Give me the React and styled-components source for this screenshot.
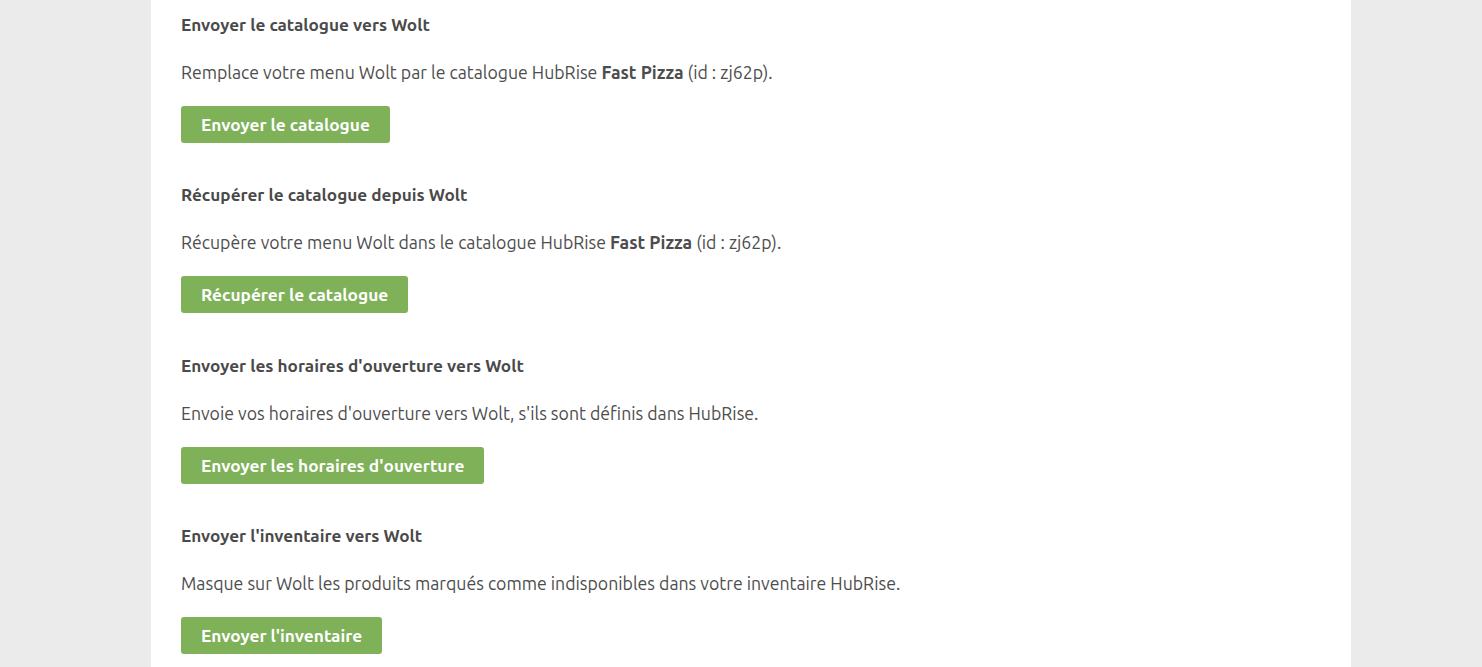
import styled, { createGlobalStyle } from "styled-components";

const GlobalStyle = createGlobalStyle`
  html, body {
    margin: 0;
    padding: 0;
    background: #ebebeb;
    font-family: Ubuntu, "Open Sans", "Liberation Sans", sans-serif;
    color: #4d4d4d;
  }
`;

const Page = styled.div`
  padding-left: 151px;
  height: 667px;
  overflow: hidden;
`;

const Panel = styled.div`
  width: 1200px;
  min-height: 667px;
  background: #fff;
  box-sizing: border-box;
  padding: 14px 30px 0;
`;

const Section = styled.section`
  height: 170.3px;
`;

const Title = styled.h3`
  margin: 0;
  font-size: 17.2px;
  line-height: 22px;
  font-weight: 600;
  color: #4a4a4a;
`;

const Text = styled.p`
  margin: 26px 0 0;
  font-size: 17.7px;
  line-height: 22px;
  b {
    font-weight: 700;
  }
`;

const Button = styled.button`
  margin-top: 22px;
  height: 37px;
  padding: 0 20px;
  border: none;
  border-radius: 3px;
  background: #7eb158;
  color: #fff;
  font-family: inherit;
  font-size: 17.3px;
  font-weight: 600;
  cursor: pointer;
`;

const sections = [
  {
    title: "Envoyer le catalogue vers Wolt",
    text: (
      <>
        Remplace votre menu Wolt par le catalogue HubRise <b>Fast Pizza</b> (id : zj62p).
      </>
    ),
    button: "Envoyer le catalogue",
  },
  {
    title: "Récupérer le catalogue depuis Wolt",
    text: (
      <>
        Récupère votre menu Wolt dans le catalogue HubRise <b>Fast Pizza</b> (id : zj62p).
      </>
    ),
    button: "Récupérer le catalogue",
  },
  {
    title: "Envoyer les horaires d'ouverture vers Wolt",
    text: "Envoie vos horaires d'ouverture vers Wolt, s'ils sont définis dans HubRise.",
    button: "Envoyer les horaires d'ouverture",
  },
  {
    title: "Envoyer l'inventaire vers Wolt",
    text: "Masque sur Wolt les produits marqués comme indisponibles dans votre inventaire HubRise.",
    button: "Envoyer l'inventaire",
  },
];

export default function App() {
  return (
    <>
      <GlobalStyle />
      <Page>
        <Panel>
          {sections.map((s) => (
            <Section key={s.button}>
              <Title>{s.title}</Title>
              <Text>{s.text}</Text>
              <Button>{s.button}</Button>
            </Section>
          ))}
        </Panel>
      </Page>
    </>
  );
}
